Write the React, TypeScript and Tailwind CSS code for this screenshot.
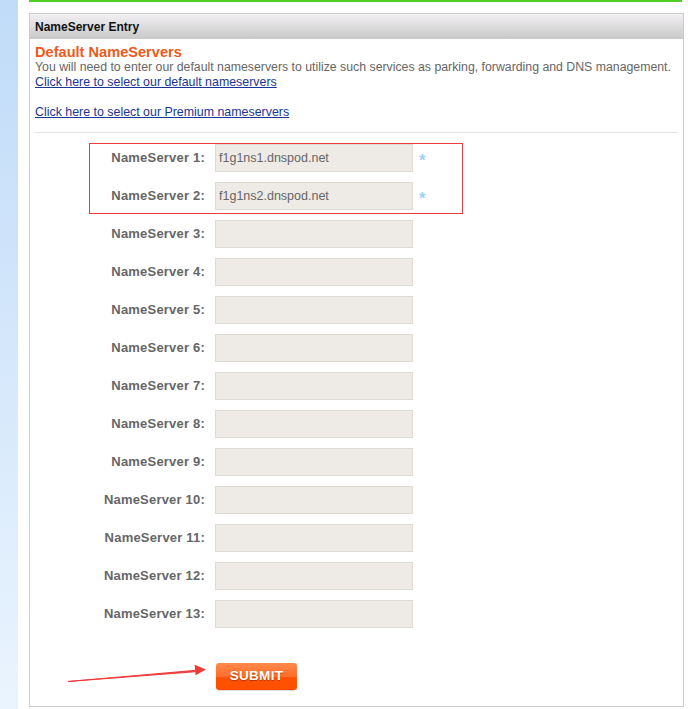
const FONT = "font-['Liberation_Sans',Arial,sans-serif]";

const servers = [
  "f1g1ns1.dnspod.net",
  "f1g1ns2.dnspod.net",
  "",
  "",
  "",
  "",
  "",
  "",
  "",
  "",
  "",
  "",
  "",
];

function Row({ n, value, required }: { n: number; value: string; required?: boolean }) {
  return (
    <div className="flex h-[28px] items-center">
      <label className="w-[170px] text-right text-[13px] font-bold tracking-[0.2px] text-[#666666]">
        NameServer {n}:
      </label>
      <input
        defaultValue={value}
        className="ml-[10px] h-[28px] w-[198px] border border-[#dedad4] bg-[#eeebe6] px-[3px] text-[12.5px] text-[#666666] outline-none"
      />
      {required && <span className="ml-[6px] mt-[4px] text-[17px] leading-none font-bold text-[#9fd0f5]">*</span>}
    </div>
  );
}

export default function App() {
  return (
    <div className={`flex h-[709px] w-[688px] overflow-hidden bg-white ${FONT}`}>
      {/* left rail */}
      <div className="w-[18px] shrink-0 bg-gradient-to-b from-[#c0dbf8] to-[#eaf4fe]" />

      <div className="ml-[11px] flex w-[655px] flex-col">
        <div className="h-[2px] w-[653px] bg-[#4dcf26]" />

        <div className="mt-[11px] flex h-[694px] flex-col border border-[#cccccc]">
          <div className="flex h-[25px] items-center bg-gradient-to-b from-[#f3f0f3] to-[#c9c9c9] px-[5px] text-[12px] font-bold text-[#111111]">
            NameServer Entry
          </div>

          <div className="px-[5px] pt-[5px]">
            <h2 className="text-[14.6px] leading-[16px] font-bold text-[#ee5a1c]">Default NameServers</h2>
            <p className="text-[12.3px] leading-[15px] text-[#666666]">
              You will need to enter our default nameservers to utilize such services as parking, forwarding and DNS management.
            </p>
            <a href="#" className="block text-[12.4px] leading-[15px] text-[#1b3596] underline">
              Click here to select our default nameservers
            </a>
            <div className="h-[15px]" />
            <a href="#" className="block text-[12.4px] leading-[15px] text-[#1b3596] underline">
              Click here to select our Premium nameservers
            </a>

            <div className="mt-[12px] h-px bg-[#e3e3e3]" />

            <div className="relative mt-[11px] flex flex-col gap-[10px]">
              {/* annotation box round the first two rows */}
              <div className="pointer-events-none absolute left-[54px] top-[-1px] h-[71px] w-[374px] border-[1.5px] border-[#ec3b3b]" />
              {servers.map((v, i) => (
                <Row key={i} n={i + 1} value={v} required={i < 2} />
              ))}
            </div>

            <div className="relative mt-[35px] flex">
              <svg
                className="pointer-events-none absolute left-[-2px] top-[-3px]"
                width="180"
                height="26"
                viewBox="0 0 180 26"
              >
                <path d="M35 21.5 L164 10.2 L164 11.6 Z" fill="#f03a3a" stroke="#f03a3a" strokeWidth="1" strokeLinejoin="round" />
                <polygon points="173,9.5 161.6,4.8 162.6,15.2" fill="#f03a3a" />
              </svg>
              <button className="ml-[181px] h-[27px] w-[81px] rounded-[3px] bg-[linear-gradient(#ff8a4c,#ff6d2a_50%,#ff5300_54%,#ff4e00)] text-[13.5px] font-bold tracking-[0.3px] text-white shadow-[0_1px_1px_rgba(0,0,0,0.15)] [text-shadow:0_1px_1px_rgba(120,30,0,0.6)]">
                SUBMIT
              </button>
            </div>
          </div>
        </div>
      </div>
    </div>
  );
}
